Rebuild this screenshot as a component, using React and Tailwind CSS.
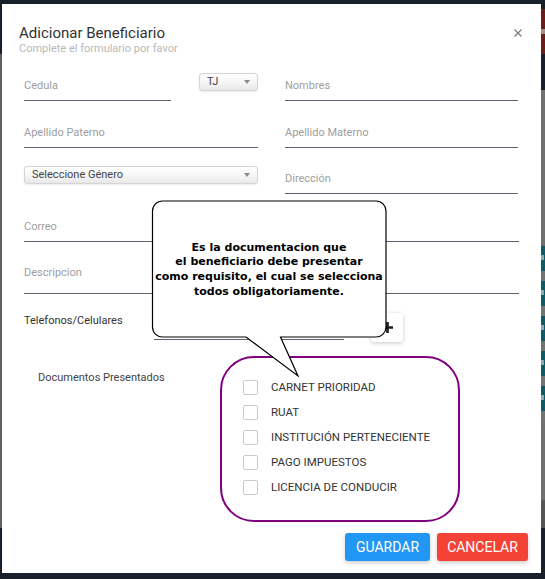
import React from "react";

// dimmed page behind the modal (only a thin strip shows)
const Strip = () => (
  <div className="w-[4px] flex flex-col">
    <div className="h-[9px] bg-[#18202b]" />
    <div className="h-[45px] bg-[#6b1d16] flex flex-col pt-[20px]">
      <div className="h-[5px] bg-[#a58c88]" />
    </div>
    <div className="h-[36px] bg-[#18202b]" />
    <div className="h-[156px] bg-[#707070]" />
    {[0, 1, 2, 3, 4].map((i) => (
      <div key={i} className="flex flex-col">
        <div className="h-[25px] bg-[#0c5b66] flex flex-col pt-[9px]">
          <div className="h-[5px] w-[3px] bg-[#8fa6aa]" />
        </div>
        <div className="h-[10px] bg-[#737373]" />
      </div>
    ))}
    <div className="h-[79px] bg-[#707070]" />
    <div className="h-[28px] bg-[#565656]" />
    <div className="flex-1 bg-[#18202b]" />
  </div>
);

const Field = ({ label, className = "" }) => (
  <div
    className={`flex items-end border-b border-[#5f6170] pb-[7px] h-[37px] ${className}`}
  >
    <span className="text-[11px] leading-[14px] text-[#9e9e9e]">{label}</span>
  </div>
);

const Select = ({ text, className = "" }) => (
  <div
    className={`flex items-center justify-between h-[18px] border border-[#d4d4d4] rounded-[3px] bg-linear-to-b from-white via-[#f6f6f6] to-[#e9e9e9] shadow-[0_1px_2px_rgba(0,0,0,0.08)] pl-[7px] pr-[7px] ${className}`}
  >
    <span className="text-[11px] leading-[14px] text-[#444]">{text}</span>
    <svg width="6" height="4" viewBox="0 0 6 4">
      <path d="M0 0h6L3 4z" fill="#8a8a8a" />
    </svg>
  </div>
);

const docs = [
  "CARNET PRIORIDAD",
  "RUAT",
  "INSTITUCIÓN PERTENECIENTE",
  "PAGO IMPUESTOS",
  "LICENCIA DE CONDUCIR",
];

export default function App() {
  return (
    <div className="w-[545px] h-[579px] bg-[#18202b] flex overflow-hidden font-['Roboto',sans-serif]">
      <div className="w-[2px] flex flex-col">
        <div className="h-[54px] bg-[#18202b]" />
        <div className="h-[474px] bg-[#5e5f61]" />
        <div className="flex-1 bg-[#18202b]" />
      </div>

      <div className="relative w-[539px] h-[569px] mt-[4px] bg-white">
        {/* header */}
        <div className="flex justify-between pl-[17px] pr-[19px] pt-[20px]">
          <div>
            <h1 className="text-[15px] leading-[18px] text-[#333]">
              Adicionar Beneficiario
            </h1>
            <p className="text-[11px] leading-[13px] text-[#b8b8b8]">
              Complete el formulario por favor
            </p>
          </div>
          <svg className="mt-[5px]" width="8" height="8" viewBox="0 0 8 8">
            <path d="M0.5 0.5L7.5 7.5M7.5 0.5L0.5 7.5" stroke="#7a7a7a" strokeWidth="1.2" />
          </svg>
        </div>

        {/* form */}
        <div className="px-[22px] mt-[9px]">
          <div className="grid grid-cols-[234px_233px] gap-x-[27px] items-end">
            <div className="flex items-end gap-[28px]">
              <Field label="Cedula" className="w-[147px]" />
              <Select text="TJ" className="w-[59px] mb-[10px]" />
            </div>
            <Field label="Nombres" />
          </div>

          <div className="grid grid-cols-[234px_233px] gap-x-[27px] items-end mt-[10px]">
            <Field label="Apellido Paterno" />
            <Field label="Apellido Materno" />
          </div>

          <div className="grid grid-cols-[234px_233px] gap-x-[27px] items-end mt-[9px]">
            <Select text="Seleccione Género" className="mb-[10px]" />
            <Field label="Dirección" />
          </div>

          <Field label="Correo" className="mt-[11px]" />
          <Field label="Descripcion" className="mt-[10px] h-[42px] pb-[13px]" />

          <div className="flex h-[29px] mt-[19px]">
            <span className="w-[130px] mt-[1px] text-[11px] leading-[14px] text-[#333]">
              Telefonos/Celulares
            </span>
            <div className="w-[190px] h-[27px] border-b border-[#5f6170]" />
            <div className="ml-[27px] w-[32px] h-[29px] rounded-[3px] bg-white shadow-[0_1px_4px_rgba(0,0,0,0.22)] flex items-center justify-center">
              <svg width="11" height="11" viewBox="0 0 11 11">
                <path d="M5.5 0v11M0 5.5h11" stroke="#1b1b1b" strokeWidth="2.6" />
              </svg>
            </div>
          </div>

          <div className="flex mt-[14px]">
            <span className="ml-[14px] w-[182px] mt-[15px] text-[11px] leading-[14px] text-[#444]">
              Documentos Presentados
            </span>
            <div className="w-[240px] h-[166px] border-2 border-[#800080] rounded-[34px] pl-[21px] pt-[22px] flex flex-col gap-[10px]">
              {docs.map((d) => (
                <label key={d} className="flex items-center gap-[13px]">
                  <span className="w-[15px] h-[15px] border border-[#cacaca] rounded-[2px] bg-white" />
                  <span className="text-[11.5px] leading-[15px] text-[#333]">{d}</span>
                </label>
              ))}
            </div>
          </div>
        </div>

        {/* actions */}
        <div className="flex justify-end gap-[7px] pr-[13px] mt-[11px]">
          <button className="w-[85px] h-[28px] rounded-[3px] bg-[#2196f3] text-white text-[14px] shadow-[0_2px_4px_rgba(0,0,0,0.2)]">
            GUARDAR
          </button>
          <button className="w-[91px] h-[28px] rounded-[3px] bg-[#f44336] text-white text-[14px] shadow-[0_2px_4px_rgba(0,0,0,0.2)]">
            CANCELAR
          </button>
        </div>

        {/* speech bubble annotation */}
        <svg
          className="absolute left-[149px] top-[196px]"
          width="236"
          height="181"
          viewBox="0 0 236 181"
        >
          <path
            d="M11.5 1H225A10 10 0 0 1 235 11V127A10 10 0 0 1 225 137H129.5L147 176L95 137H11.5A10 10 0 0 1 1.5 127V11A10 10 0 0 1 11.5 1Z"
            fill="white"
            stroke="black"
            strokeWidth="1.2"
          />
        </svg>
        <div className="absolute left-[150px] top-[197px] w-[234px] h-[136px] flex items-center justify-center pt-[2px] text-center font-['DejaVu_Sans',sans-serif] font-bold text-[11px] leading-[14.7px] text-black">
          <p>
            Es la documentacion que
            <br />
            el beneficiario debe presentar
            <br />
            como requisito, el cual se selecciona
            <br />
            todos obligatoriamente.
          </p>
        </div>
      </div>

      <Strip />
    </div>
  );
}
